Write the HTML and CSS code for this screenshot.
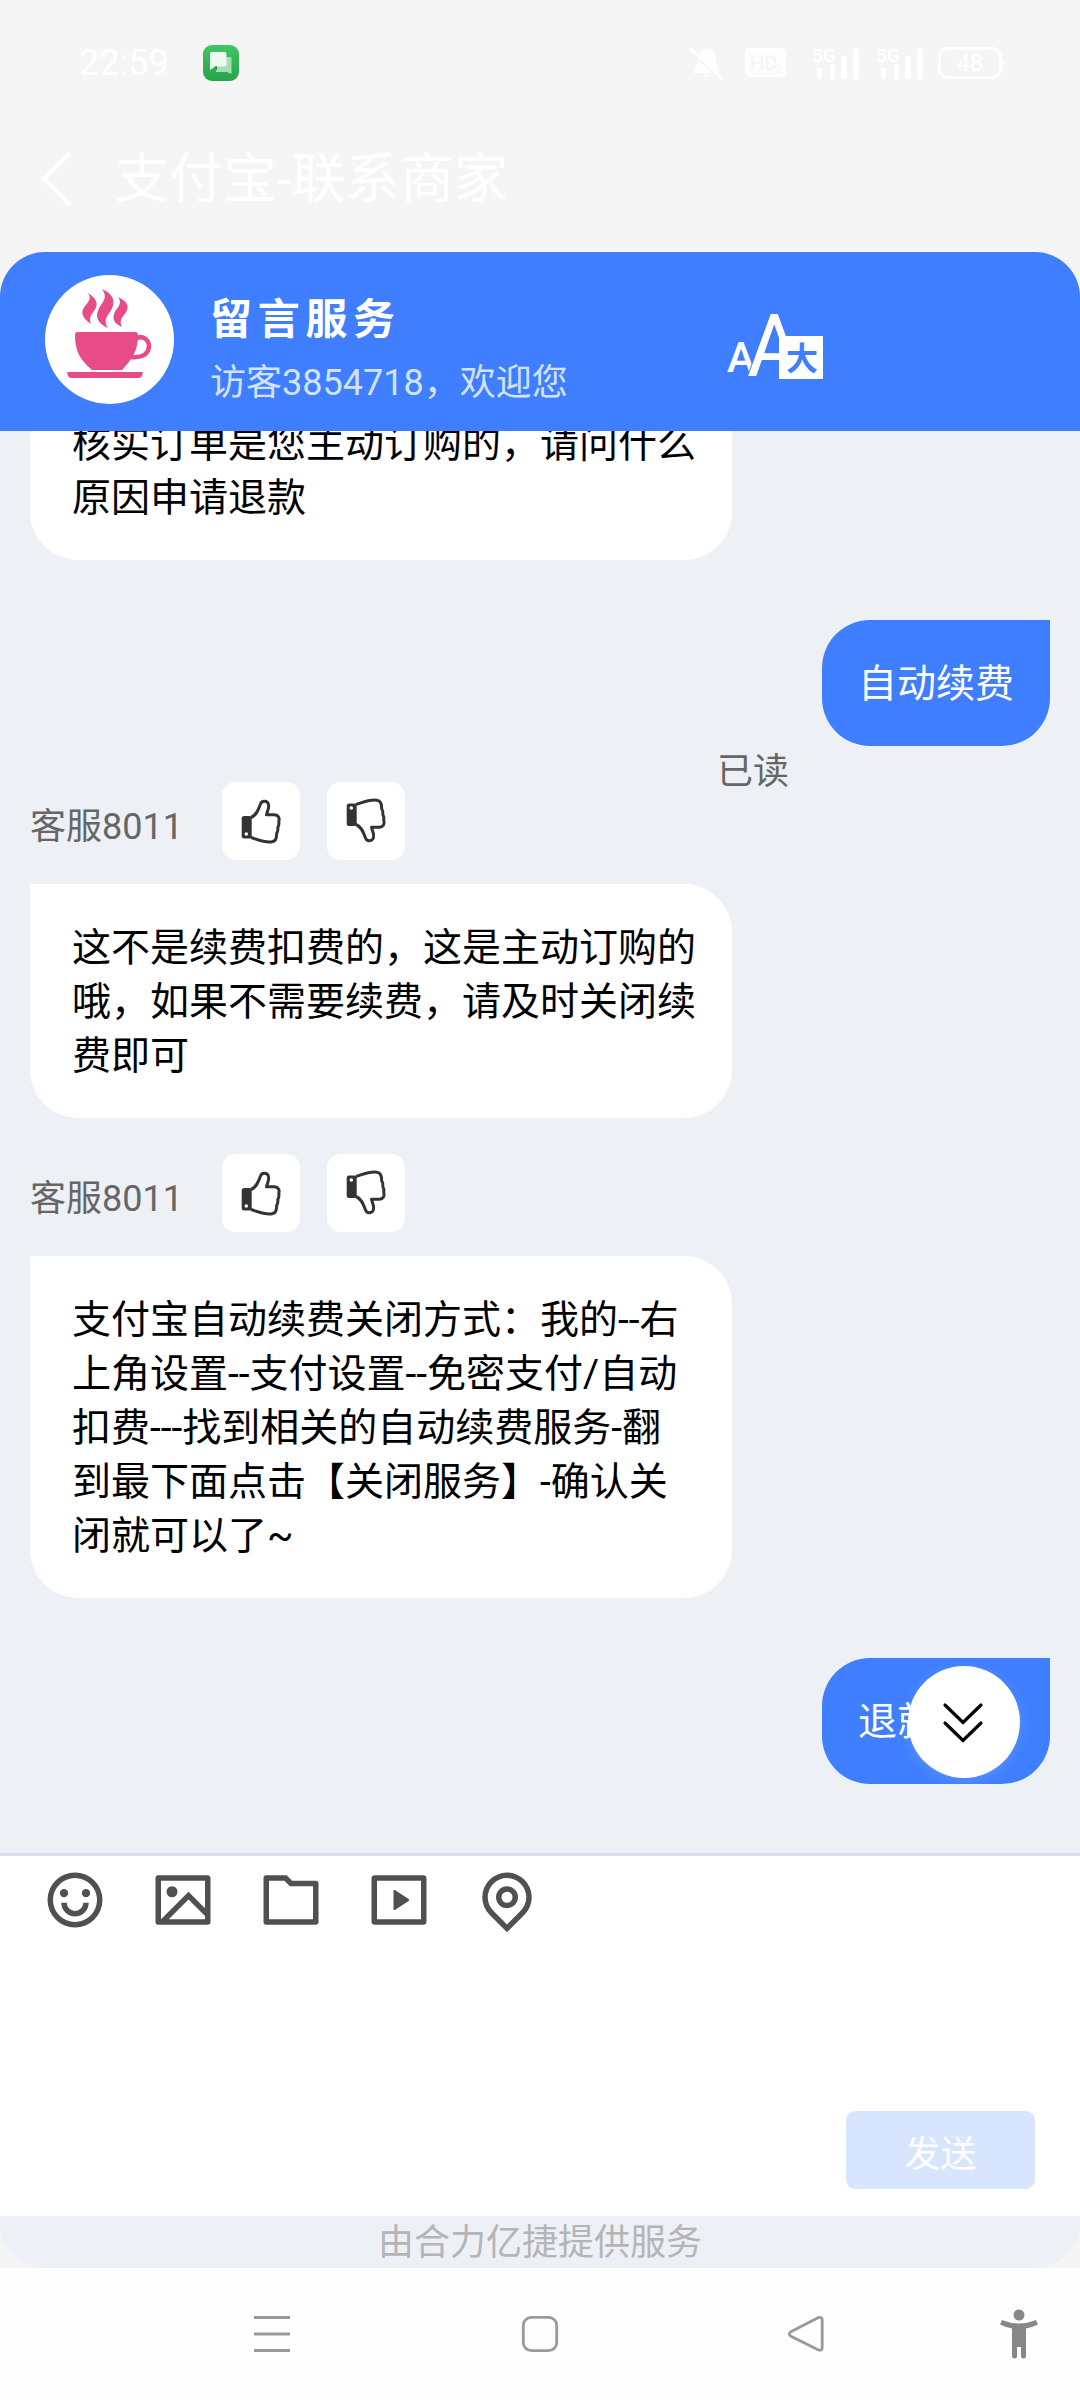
FILE: index.html
```html
<!DOCTYPE html>
<html lang="zh-CN">
<head>
<meta charset="utf-8">
<title>支付宝-联系商家</title>
<link rel="stylesheet" href="styles.css">
</head>
<body>
<header class="status">
  <span class="clock">22:59</span>
  <svg class="app" viewBox="0 0 36 36">
    <defs><linearGradient id="g" x1="0" y1="0" x2="0" y2="1"><stop offset="0" stop-color="#3bc864"/><stop offset="1" stop-color="#28a348"/></linearGradient></defs>
    <rect width="36" height="36" rx="9" fill="url(#g)"/>
    <path d="M13 12H28.500V29L24 27H13Z" fill="#a5dfb4"/>
    <path d="M9 7H21.500Q23.500 7 23.500 9V19.500Q23.500 21.500 21.500 21.500H12L7 25V9Q7 7 9 7Z" fill="#edfaf0"/>
    <path d="M12 21.500H14V26Z" fill="#23843d"/>
  </svg>
  <div class="indicators">
    <svg width="34" height="34" viewBox="0 0 34 34"><path d="M4 27Q7 23 8 17Q8 5 18 2Q27 4 27 14Q27 23 31 27ZM14 29H21Q18 32 14 29Z"/><path d="M0 2L32 33" stroke="#f5f5f5" stroke-width="5"/><path d="M1 2L33 33" stroke="#fff" stroke-width="3"/></svg>
    <svg width="42" height="30" viewBox="0 0 42 30"><rect x="1.500" y="1.500" width="38" height="26" rx="4" fill="none" stroke="#fff" stroke-width="3"/><rect x="3" y="3" width="35" height="23" opacity=".8"/><text x="5" y="22" font-size="20" fill="#f5f5f5">HD</text><text x="31" y="25" font-size="12" fill="#f5f5f5">2</text></svg>
    <svg width="50" height="34" viewBox="0 0 50 34"><rect x="5" y="22" width="5" height="11" rx="1"/><rect x="18" y="18" width="5" height="15" rx="1"/><rect x="29" y="10" width="6" height="23" rx="1"/><rect x="41" y="3" width="6" height="30" rx="1"/><text x="0" y="16" font-size="19" font-weight="500">5G</text></svg>
    <svg width="50" height="34" viewBox="0 0 50 34"><rect x="5" y="22" width="5" height="11" rx="1"/><rect x="18" y="18" width="5" height="15" rx="1"/><rect x="29" y="10" width="6" height="23" rx="1"/><rect x="41" y="3" width="6" height="30" rx="1"/><text x="0" y="16" font-size="19" font-weight="500">5G</text></svg>
    <svg width="68" height="32" viewBox="0 0 68 32"><rect x="1.500" y="1.500" width="61" height="29" rx="8" fill="none" stroke="#fff" stroke-width="3"/><path d="M65 11Q68 16 65 21Z"/><text x="19" y="24" font-size="23">48</text></svg>
  </div>
</header>

<div class="titlebar">
  <svg width="34" height="56" viewBox="0 0 34 56"><path d="M30 2L4 28L30 54" fill="none" stroke="#fff" stroke-width="4.500"/></svg>
  <h1>支付宝-联系商家</h1>
</div>

<main class="window">
  <section class="agent">
    <svg class="avatar" viewBox="0 0 129 129">
      <circle cx="64.500" cy="64.500" r="64.500" fill="#fff"/>
      <g fill="#e74b88">
        <path d="M33 57H90Q93 57 93 60C93 76 87 84 77 95H47C35 85 30 76 30 60Q30 57 33 57Z"/>
        <path d="M22 97H98Q97 103 94 103H26Q23 103 22 97Z"/>
        <path d="M43 18C52 24 54 29 49 36C45 41 44 44 46 49C37 43 35 37 40 31C45 25 46 23 43 18Z"/>
        <path d="M57 14C70 20 71 28 65 37C59 45 60 48 63 53C50 47 50 39 56 30C61 23 61 20 57 14Z"/>
        <path d="M73 22C84 27 85 33 79 40C75 45 75 48 77 52C67 48 67 41 71 35C76 29 76 26 73 22Z"/>
      </g>
      <path d="M91 63.500C97 60 104 64 104 72C103 80 96 83 86 82" fill="none" stroke="#e74b88" stroke-width="4.500"/>
    </svg>
    <div class="agent-text">
      <h2>留言服务</h2>
      <p>访客3854718，欢迎您</p>
    </div>
    <svg class="translate" viewBox="0 0 98 68">
      <text x="0" y="60" font-size="42" font-weight="500">A</text>
      <text transform="translate(20 64) scale(.95 1)" font-size="88" font-weight="400" class="letter-large">A</text>
      <rect x="52" y="24" width="44" height="43"/>
      <text x="59" y="57.500" font-size="32" font-weight="700" fill="#3e7eff">大</text>
    </svg>
  </section>

  <section class="chat">
    <div class="bubble in cut">核实订单是您主动订购的，请问什么<br>原因申请退款</div>
    <div class="bubble out">自动续费</div>
    <div class="read">已读</div>
    <div class="meta"><span>客服8011</span>
      <button><svg viewBox="0 0 78 78"><rect x="19.700" y="34" width="10" height="22.500" rx="2.500" fill="#333"/><path d="M29 35.500C35 33 36.500 27 38.500 22C39.800 18.200 45.500 18.600 46.500 22.500C47.500 26.500 45 29.500 44.500 32.800H52.500C56.500 33 57.800 36 56.800 39.500C57.200 42 56.800 44 55.800 45.500C56.200 48 55.600 50 54.600 51.500C54.800 56.500 53.500 59.300 50 59.800C43 61 35.500 57.500 29 55.500"/><circle cx="24.300" cy="52" r="1.800" fill="#fff"/></svg></button>
      <button class="down"><svg viewBox="0 0 78 78"><rect x="19.700" y="34" width="10" height="22.500" rx="2.500" fill="#333"/><path d="M29 35.500C35 33 36.500 27 38.500 22C39.800 18.200 45.500 18.600 46.500 22.500C47.500 26.500 45 29.500 44.500 32.800H52.500C56.500 33 57.800 36 56.800 39.500C57.200 42 56.800 44 55.800 45.500C56.200 48 55.600 50 54.600 51.500C54.800 56.500 53.500 59.300 50 59.800C43 61 35.500 57.500 29 55.500"/><circle cx="24.300" cy="52" r="1.800" fill="#fff"/></svg></button>
    </div>
    <div class="bubble in">这不是续费扣费的，这是主动订购的<br>哦，如果不需要续费，请及时关闭续<br>费即可</div>
    <div class="meta next"><span>客服8011</span>
      <button><svg viewBox="0 0 78 78"><rect x="19.700" y="34" width="10" height="22.500" rx="2.500" fill="#333"/><path d="M29 35.500C35 33 36.500 27 38.500 22C39.800 18.200 45.500 18.600 46.500 22.500C47.500 26.500 45 29.500 44.500 32.800H52.500C56.500 33 57.800 36 56.800 39.500C57.200 42 56.800 44 55.800 45.500C56.200 48 55.600 50 54.600 51.500C54.800 56.500 53.500 59.300 50 59.800C43 61 35.500 57.500 29 55.500"/><circle cx="24.300" cy="52" r="1.800" fill="#fff"/></svg></button>
      <button class="down"><svg viewBox="0 0 78 78"><rect x="19.700" y="34" width="10" height="22.500" rx="2.500" fill="#333"/><path d="M29 35.500C35 33 36.500 27 38.500 22C39.800 18.200 45.500 18.600 46.500 22.500C47.500 26.500 45 29.500 44.500 32.800H52.500C56.500 33 57.800 36 56.800 39.500C57.200 42 56.800 44 55.800 45.500C56.200 48 55.600 50 54.600 51.500C54.800 56.500 53.500 59.300 50 59.800C43 61 35.500 57.500 29 55.500"/><circle cx="24.300" cy="52" r="1.800" fill="#fff"/></svg></button>
    </div>
    <div class="bubble in">支付宝自动续费关闭方式：我的--右<br>上角设置--支付设置--免密支付/自动<br>扣费---找到相关的自动续费服务-翻<br>到最下面点击【关闭服务】-确认关<br>闭就可以了~</div>
    <div class="bubble out">退就</div>
    <button class="to-end"><svg width="40" height="42" viewBox="0 0 40 42"><path d="M2 3L20 20.500L38 3M2 21L20 38.500L38 21" fill="none" stroke="#000" stroke-width="3.200" stroke-linecap="round"/></svg></button>
  </section>

  <section class="composer">
    <div class="tools">
      <svg viewBox="0 0 24 24"><path fill-rule="evenodd" d="M12 2a10 10 0 1 1 0 20 10 10 0 0 1 0-20zM12 4a8 8 0 1 0 0 16 8 8 0 0 0 0-16z"/><path d="M7 13h2a3 3 0 0 0 6 0h2a5 5 0 0 1-10 0z"/><circle cx="8" cy="9.500" r="1.500"/><circle cx="16" cy="9.500" r="1.500"/></svg>
      <svg viewBox="0 0 24 24"><path d="M4.828 21l-.02.02-.021-.02H2.992A.993.993 0 0 1 2 20.007V3.993A1 1 0 0 1 2.992 3h18.016c.548 0 .992.445.992.993v16.014a1 1 0 0 1-.992.993H4.828zM20 15V5H4v14L14 9l6 6zm0 2.828l-6-6L6.828 19H20v-1.172zM8 11a2 2 0 1 1 0-4 2 2 0 0 1 0 4z"/></svg>
      <svg viewBox="0 0 24 24"><path d="M4 5v14h16V7h-8.414l-2-2H4zm8.414 0H21a1 1 0 0 1 1 1v14a1 1 0 0 1-1 1H3a1 1 0 0 1-1-1V4a1 1 0 0 1 1-1h7.414l2 2z"/></svg>
      <svg viewBox="0 0 24 24"><rect x="3" y="4" width="18" height="16" rx=".2" fill="none" stroke="#505050" stroke-width="2" stroke-linejoin="round"/><path d="M10.622 8.415l4.879 3.252a.4.4 0 0 1 0 .666l-4.880 3.252a.4.4 0 0 1-.621-.332V8.747a.4.4 0 0 1 .622-.332z"/></svg>
      <svg viewBox="0 0 24 24"><path d="M12 23.728l-6.364-6.364a9 9 0 1 1 12.728 0L12 23.728zm4.950-7.778a7 7 0 1 0-9.900 0L12 20.900l4.950-4.950zM12 15a4 4 0 1 1 0-8 4 4 0 0 1 0 8zm0-2a2 2 0 1 0 0-4 2 2 0 0 0 0 4z"/></svg>
    </div>
    <button class="send">发送</button>
  </section>
  <footer>由合力亿捷提供服务</footer>
</main>

<nav class="navbar">
  <svg viewBox="0 0 36 36"><path d="M0 1.500H36M0 18H36M0 34.500H36"/></svg>
  <svg viewBox="0 0 36 36"><rect x="1.300" y="1.300" width="33.400" height="33.400" rx="8"/></svg>
  <svg viewBox="0 0 36 36"><path d="M30.500 1.500L2.500 16Q0 18 2.500 20L30.500 34Q34.200 35 34.200 31.500V4Q34.200 .5 30.500 1.500Z"/></svg>
  <svg class="person" viewBox="0 0 38 50"><circle cx="19" cy="6" r="5.500"/><path d="M2 11Q19 18 36 11L38 15.500Q32 18.500 26 19.500V47Q26 49.500 23.500 49.500T21 47V38H17V47Q17 49.500 14.500 49.500T12 47V19.500Q6 18.500 0 15.500Z"/></svg>
</nav>
</body>
</html>
```
FILE: styles.css
```css
* { box-sizing: border-box; margin: 0; padding: 0; }
body {
  width: 1080px; height: 2400px; overflow: hidden;
  display: flex; flex-direction: column;
  background: #f5f5f5;
  font-family: Roboto, "Noto Sans CJK SC", sans-serif;
  text-spacing-trim: space-all;
}
button { border: 0; font: inherit; display: flex; align-items: center; justify-content: center; }
svg { overflow: visible; }

.status { height: 126px; padding: 0 74px 0 79px; display: flex; align-items: center; color: #fff; }
.clock { font-size: 36px; width: 124px; }
.app { width: 36px; height: 36px; }
.indicators { margin-left: auto; display: flex; align-items: center; gap: 14px; fill: #fff; }
.indicators svg:nth-child(1) { margin-right: 8px; }
.indicators svg:nth-child(2) { margin-right: 11px; }
.indicators svg:nth-child(4) { margin-right: -2px; }

.titlebar { height: 126px; padding-left: 40px; display: flex; align-items: center; gap: 41px; padding-bottom: 20px; color: #fff; }
h1 { font-size: 54px; font-weight: 400; line-height: 60px; padding-top: 2px; }

.window { height: 2016px; display: flex; flex-direction: column; border-radius: 45px; overflow: hidden; background: #edf1f5; }
.agent { height: 179px; flex: none; background: #3e7eff; display: flex; padding: 23px 0 0 45px; }
.avatar { width: 129px; height: 129px; }
.agent-text { width: 516px; padding: 17px 0 0 36px; color: #fff; }
h2 { font-size: 42px; line-height: 56px; letter-spacing: 5.700px; font-weight: 700; }
.agent-text p { font-size: 36px; line-height: 54px; margin-top: 8px; color: #d3e2ff; white-space: nowrap; }
.translate { width: 98px; height: 68px; margin: 37px 0 0 37px; fill: #fff; }
.letter-large { stroke: #3e7eff; stroke-width: 2px; paint-order: stroke; }

.chat { position: relative; height: 1422px; flex: none; overflow: hidden; display: flex; flex-direction: column; justify-content: flex-end; padding: 0 30px 69px; }
.bubble { flex: none; font-size: 39px; line-height: 54px; padding: 37px 36px 35px; white-space: nowrap; }
.in { width: 702px; padding-left: 42px; background: #fff; color: #000; border-radius: 0 48px 48px 48px; }
.cut { border-top-right-radius: 0; }
.out { width: 228px; align-self: flex-end; margin-top: 60px; background: #3e7eff; color: #fff; border-radius: 48px 0 48px 48px; }
.read { height: 36px; flex: none; padding-left: 687px; font-size: 36px; line-height: 52px; color: #666; }
.meta { height: 78px; flex: none; display: flex; align-items: center; gap: 27px; margin-bottom: 24px; font-size: 36px; color: #666; }
.meta span { width: 165px; padding-top: 3px; }
.next { margin-top: 36px; }
.meta button { width: 78px; height: 78px; border-radius: 14px; background: #fff; }
.meta svg { width: 78px; height: 78px; fill: none; }
.meta path { stroke: #333; stroke-width: 3px; stroke-linejoin: round; }
.down svg { transform: scaleY(-1); }
.to-end { position: absolute; right: 60px; bottom: 75px; width: 112px; height: 112px; border-radius: 50%; background: #fff; padding: 2px 2px 0 0; box-shadow: 0 3px 14px rgba(255,255,255,.15); }

.composer { height: 363px; flex: none; border-top: 3px solid #dcdcec; background: #fff; padding: 11px 45px 27px 42px; display: flex; flex-direction: column; justify-content: space-between; }
.tools { display: flex; gap: 42px; }
.tools svg { width: 66px; height: 66px; fill: #505050; }
.send { align-self: flex-end; width: 189px; height: 78px; border-radius: 9px; background: #d8e5ff; color: #fff; font-size: 36px; padding-top: 1px; }
footer { height: 52px; text-align: center; font-size: 36px; line-height: 55px; color: #b5b5b5; }

.navbar { height: 132px; background: #fefefe; display: flex; align-items: center; padding-left: 254px; fill: none; stroke: #999; stroke-width: 2.800px; }
.navbar svg { width: 36px; height: 36px; margin-right: 232px; }
.navbar svg:nth-child(2) { margin-right: 230px; }
.navbar svg:nth-child(3) { margin-right: 176px; }
.navbar .person { width: 38px; height: 50px; margin: 0; fill: #878787; stroke: none; }
```
